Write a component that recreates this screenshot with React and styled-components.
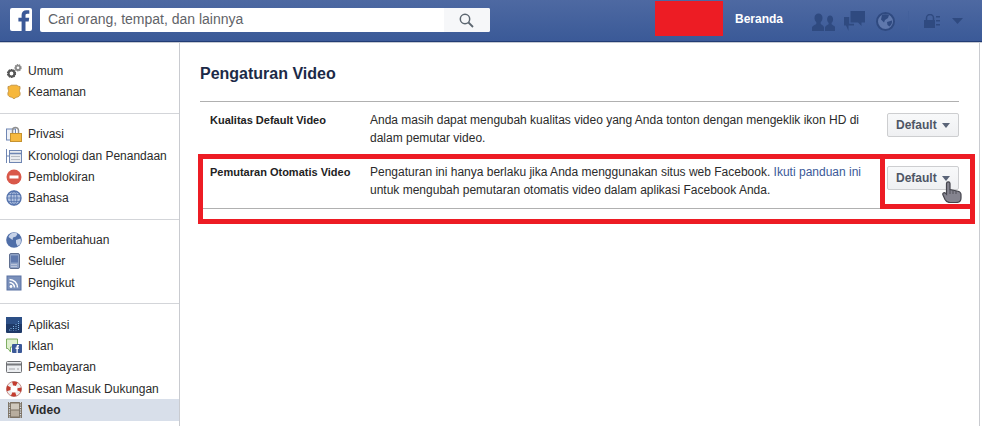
import React from "react";
import styled, { createGlobalStyle } from "styled-components";

const Global = createGlobalStyle`
  html, body { margin: 0; padding: 0; background: #fff; }
  body { font-family: "Liberation Sans", Arial, sans-serif; font-size: 12px; color: #333; }
  #root { width: 982px; height: 426px; overflow: hidden; position: relative; }
`;

const Page = styled.div`
  width: 982px;
  height: 426px;
  position: relative;
  overflow: hidden;
  display: flex;
  flex-direction: column;
`;

const Header = styled.header`
  height: 41px;
  flex: none;
  display: flex;
  align-items: flex-start;
  background: linear-gradient(#4e69a2, #3d5c99 85%, #3b5998);
  border-bottom: 1px solid #223c74;
  box-shadow: 0 1px 0 #c6cad3;
  padding-left: 10px;
`;

const Logo = styled.svg`
  width: 22px;
  height: 23px;
  margin-top: 8px;
  flex: none;
`;

const Search = styled.div`
  width: 450px;
  height: 24px;
  margin: 8px 0 0 8px;
  display: flex;
  background: #fff;
  border-radius: 2px;
  overflow: hidden;
  flex: none;
`;

const SearchText = styled.div`
  flex: 1;
  padding-left: 8px;
  font-size: 14px;
  line-height: 23px;
  color: #5f6368;
`;

const SearchButton = styled.div`
  width: 46px;
  background: #f6f7f9;
  display: flex;
  align-items: center;
  justify-content: center;
  padding-right: 2px;
  box-sizing: border-box;
`;

const Redaction = styled.div`
  width: 68px;
  height: 35px;
  margin: 1px 0 0 165px;
  background: #ed1c24;
  flex: none;
`;

const HomeLink = styled.div`
  margin-left: 12px;
  width: 69px;
  flex: none;
  font-size: 12px;
  font-weight: 700;
  line-height: 38px;
  color: #fff;
`;

const HeaderIcons = styled.div`
  display: flex;
  align-items: center;
  height: 38px;
  flex: none;
`;

const HeaderIcon = styled.svg`
  display: block;
  flex: none;
  margin-left: ${(p) => p.$gap}px;
  margin-top: 4px;
`;

const Divider = styled.div`
  width: 1px;
  height: 20px;
  margin-left: 13px;
  margin-top: 4px;
  background: #43609b;
`;

const Body = styled.div`
  flex: 1;
  display: flex;
  margin-top: 1px;
  min-height: 0;
  width: 980px;
`;

const Sidebar = styled.nav`
  width: 179px;
  flex: none;
  border-right: 1px solid #c9cbd0;
  padding-top: 17.5px;
`;

const Group = styled.ul`
  list-style: none;
  margin: 0;
  padding: 0 0 10px;
  & + & {
    padding-top: 9.5px;
    border-top: 1px solid #d3d5d9;
  }
`;

const Item = styled.li`
  height: 21.33px;
  display: flex;
  align-items: center;
  gap: 6px;
  padding-left: 6px;
  font-size: 12px;
  color: #2b2b2b;
  font-weight: ${(p) => (p.$active ? 700 : 400)};
  background: ${(p) => (p.$active ? "#d8dfea" : "transparent")};
`;

const ItemIcon = styled.svg`
  width: 16px;
  height: 16px;
  flex: none;
  display: block;
`;

const Main = styled.main`
  flex: 1;
  border-right: 1px solid #c9cbd0;
  padding: 0 20px;
`;

const Title = styled.h1`
  margin: 0;
  padding: 21px 0 0;
  height: 59px;
  box-sizing: border-box;
  font-size: 16px;
  line-height: 20px;
  font-weight: 700;
  color: #1c2a47;
  border-bottom: 1px solid #b0b0b0;
`;

const Row = styled.section`
  display: grid;
  grid-template-columns: 160px 500px 1fr;
  padding: ${(p) => p.$pad}px 0 0 10px;
  height: ${(p) => p.$h}px;
  box-sizing: border-box;
  border-bottom: ${(p) => (p.$last ? "1px solid #b0b0b0" : "none")};
`;

const Label = styled.div`
  font-size: 11px;
  font-weight: 700;
  line-height: 18px;
  color: #222;
`;

const Description = styled.div`
  font-size: 12px;
  line-height: 18px;
  color: #2b2b2b;
`;

const GuideLink = styled.span`
  color: #3b5998;
`;

const Cell = styled.div`
  display: flex;
  justify-content: flex-end;
`;

const Dropdown = styled.div`
  width: 72px;
  height: 24px;
  box-sizing: border-box;
  margin-top: ${(p) => p.$top}px;
  display: flex;
  align-items: center;
  gap: 5px;
  padding-left: 8px;
  border: 1px solid #cdced0;
  border-radius: 2px;
  background: linear-gradient(#f8f9fa, #eff0f2);
  font-size: 12px;
  font-weight: 700;
  color: #4e5665;
`;

const Caret = styled.span`
  width: 0;
  height: 0;
  border-left: 4px solid transparent;
  border-right: 4px solid transparent;
  border-top: 5px solid #5a6477;
`;

const Frame = styled.div`
  position: absolute;
  left: 198px;
  top: 154px;
  width: 777px;
  height: 70px;
  box-sizing: border-box;
  border: 5px solid #ed1c24;
  pointer-events: none;
`;

const Notch = styled.div`
  position: absolute;
  left: 880px;
  top: 159px;
  width: 90px;
  height: 50px;
  box-sizing: border-box;
  border-left: 5px solid #ed1c24;
  border-bottom: 5px solid #ed1c24;
`;

const Hand = styled.svg`
  position: absolute;
  left: 942px;
  top: 181px;
  width: 20px;
  height: 22px;
`;

const icons = {
  gears: (
    <>
      <circle cx="5.500" cy="10.500" r="3.800" fill="none" stroke="#555" strokeWidth="1.600" strokeDasharray="1.500 .9" />
      <circle cx="5.500" cy="10.500" r="2.900" fill="none" stroke="#555" strokeWidth="2" />
      <circle cx="12" cy="4.800" r="3" fill="none" stroke="#8a8a8a" strokeWidth="1.400" strokeDasharray="1.300 .8" />
      <circle cx="12" cy="4.800" r="2.200" fill="none" stroke="#8a8a8a" strokeWidth="1.800" />
    </>
  ),
  shield: (
    <path d="M2 2.500c1.500 0 2.200-.5 3-1.300h6c.8.8 1.500 1.300 3 1.300v2.500c-.8 1.200-.8 2.300 0 3.500 .6 2.500-.5 4-2.500 4.500-1.400.3-2.600.8-3.500 2-.9-1.200-2.100-1.700-3.500-2-2-.5-3.100-2-2.500-4.500.8-1.200.8-2.300 0-3.500z" fill="#f6b73c" stroke="#b98a3c" strokeWidth=".8" />
  ),
  lock: (
    <>
      <rect x=".5" y="3" width="9" height="11" fill="#eef1f7" stroke="#6f86b3" />
      <path d="M6.500 8V4.500a3 3 0 0 1 6 0V8" fill="none" stroke="#8f8f8f" strokeWidth="1.500" />
      <rect x="4.500" y="7.500" width="11" height="8" fill="#f6b93f" stroke="#c69330" />
    </>
  ),
  timeline: (
    <>
      <path d="M.5 1v14" stroke="#6f86b3" />
      <path d="M.5 8h3" stroke="#6f86b3" />
      <rect x="3.500" y="2.500" width="12" height="12" fill="#e9ebef" stroke="#6f86b3" />
      <path d="M3.500 5.500h12" stroke="#6f86b3" strokeWidth="1.500" />
      <path d="M5 8.500h9M5 11.500h9" stroke="#b6bac2" />
    </>
  ),
  block: (
    <>
      <circle cx="8" cy="8" r="7.500" fill="#d9584a" />
      <rect x="3.500" y="6.500" width="9" height="3" fill="#fff" />
    </>
  ),
  language: (
    <>
      <circle cx="8" cy="8" r="7" fill="#b3c3e0" stroke="#5573ad" strokeWidth="1.400" />
      <ellipse cx="8" cy="8" rx="3" ry="7" fill="none" stroke="#5573ad" />
      <path d="M1 8h14M2 4.500h12M2 11.500h12M8 1v14" stroke="#5573ad" strokeWidth=".8" />
    </>
  ),
  earth: (
    <>
      <circle cx="8" cy="8" r="7.800" fill="#4f6ea8" />
      <path d="M5 1.500c2-1 5-1 6.500.2L10 4.500 7 5.500 6.500 8 4.500 6.500 2.500 5c.5-1.500 1.500-2.800 2.500-3.500zM10 8l4.500-1.500c.8 2 .5 4-.5 6L11.500 14 10 11z" fill="#c6d2e8" />
    </>
  ),
  phone: (
    <>
      <rect x="3.500" y=".5" width="10" height="15" rx="1.500" fill="#8fa2c6" stroke="#5f6f90" />
      <rect x="5" y="2.500" width="7" height="7" fill="#5f78ac" />
      <path d="M5.500 11.500h6M5.500 13.500h6" stroke="#e4e7ee" strokeDasharray="1 1" />
    </>
  ),
  rss: (
    <>
      <rect x="1" y="1" width="14" height="14" fill="#7a90bb" stroke="#5a72a3" />
      <circle cx="5" cy="11.500" r="1.400" fill="#fff" />
      <path d="M3.500 7.500a5 5 0 0 1 5 5M3.500 4.500a8 8 0 0 1 8 8" fill="none" stroke="#fff" strokeWidth="1.500" />
    </>
  ),
  apps: (
    <>
      <rect width="16" height="16" rx="1" fill="#1f3a68" />
      <path d="M0 0h16v7H0z" fill="#2c4f86" />
      <path d="M3 13h1M5 11v2.500M7.500 9v4.500M10 7v6.500M12.500 4v9.500" stroke="#7fb5e6" strokeDasharray="1 1" />
    </>
  ),
  ads: (
    <>
      <path d="M.5 1h11v8h-7v5L2 10.500H.5z" fill="#dff0cf" stroke="#7fae63" />
      <rect x="6" y="6" width="10" height="9" rx="1" fill="#3b5998" />
      <path d="M10.500 15v-4H9.500V9.500h1V8.500c0-1 .6-1.500 1.500-1.500h1v1.500h-.7c-.4 0-.5.2-.5.5v.5h1.200l-.2 1.500h-1v4z" fill="#fff" />
    </>
  ),
  card: (
    <>
      <rect x=".5" y="2.500" width="15" height="11" rx="1" fill="#eceef1" stroke="#6e7074" />
      <rect x="1" y="4.500" width="14" height="2" fill="#77797d" />
      <path d="M3 10h6M11 10h2" stroke="#a4a6aa" />
    </>
  ),
  buoy: (
    <>
      <circle cx="8" cy="8" r="5.500" fill="none" stroke="#eee" strokeWidth="4" />
      <circle cx="8" cy="8" r="5.500" fill="none" stroke="#c43b2e" strokeWidth="4" strokeDasharray="4.300 4.340" strokeDashoffset="2.100" />
      <circle cx="8" cy="8" r="7.500" fill="none" stroke="#a8483f" strokeWidth=".6" />
    </>
  ),
  film: (
    <>
      <rect x="2" y="0" width="14" height="16" fill="#7d7264" />
      <rect x="5" y="1.500" width="8" height="6" fill="#cfc8bd" />
      <rect x="5" y="8.500" width="8" height="6" fill="#b8ad9e" />
      <path d="M3.500 0v16M14.500 0v16" stroke="#d8dfea" strokeWidth="1.200" strokeDasharray="1.200 1.200" />
    </>
  ),
};

const groups = [
  [["gears", "Umum"], ["shield", "Keamanan"]],
  [["lock", "Privasi"], ["timeline", "Kronologi dan Penandaan"], ["block", "Pemblokiran"], ["language", "Bahasa"]],
  [["earth", "Pemberitahuan"], ["phone", "Seluler"], ["rss", "Pengikut"]],
  [["apps", "Aplikasi"], ["ads", "Iklan"], ["card", "Pembayaran"], ["buoy", "Pesan Masuk Dukungan"], ["film", "Video", true]],
];

const dark = "#2f4a80";

export default function App() {
  return (
    <Page>
      <Global />
      <Header>
        <Logo viewBox="0 0 22 23">
          <rect width="22" height="23" rx="2" fill="#fff" />
          <path d="M15.500 23v-9.500h3.200l.5-3.700h-3.700V7.500c0-1.100.3-1.800 1.800-1.800h2V2.400c-.3 0-1.500-.1-2.900-.1-2.800 0-4.800 1.700-4.800 4.800v2.700H8.400v3.700h3.200V23z" fill="#3b5998" />
        </Logo>
        <Search>
          <SearchText>Cari orang, tempat, dan lainnya</SearchText>
          <SearchButton>
            <svg width="15" height="15" viewBox="0 0 15 15" fill="none" stroke="#5c6670" strokeWidth="1.500">
              <circle cx="6" cy="6" r="4.700" />
              <path d="M9.500 9.500l4.500 4.500" strokeWidth="1.800" />
            </svg>
          </SearchButton>
        </Search>
        <Redaction />
        <HomeLink>Beranda</HomeLink>
        <HeaderIcons>
          <HeaderIcon $gap={8} width="23" height="19" viewBox="0 0 23 19" fill={dark}>
            <path d="M13 19v-3.500c0-1.500 2.800-2.500 3.600-3.200v-1.500c-1-.8-1.500-2-1.500-3.600 0-2.200 1.300-3.700 3-3.700s3 1.500 3 3.700c0 1.600-.5 2.800-1.500 3.600v1.500c.8.700 2.400 1.500 3.400 2.500V19z" />
            <path d="M0 19v-3.500c0-1.500 3-2.500 4.300-3.500v-2C3 9 2.500 7.500 2.500 6c0-2.800 1.700-4.500 4-4.500s4 1.700 4 4.500c0 1.500-.5 3-1.800 4v2c1.300 1 3.300 1.800 3.300 3.500V19z" />
          </HeaderIcon>
          <HeaderIcon $gap={9} width="21" height="20" viewBox="0 0 21 20" fill={dark}>
            <path d="M6.500 0H21v11.500h-3.500V15l-3.500-3.500H6.500z" />
            <path d="M0 6h5.200v6.800H10v1.700H4.500V20L2 14.500H0z" />
          </HeaderIcon>
          <HeaderIcon $gap={11} width="19" height="19" viewBox="0 0 19 19">
            <circle cx="9.500" cy="9.500" r="8.500" fill="#5f78ac" stroke={dark} strokeWidth="2" />
            <path d="M6 3c2-1 5-1 7 0l-1 3-3 2-1 2.500-3-3zM11 10l5-1.500c.3 2.500-.7 4.500-2.500 6l-2-1.500z" fill={dark} />
          </HeaderIcon>
          <Divider />
          <HeaderIcon $gap={15} width="16" height="14" viewBox="0 0 16 14" fill={dark}>
            <path d="M2.500 6V4a3.500 3.500 0 0 1 7 0v2" fill="none" stroke={dark} strokeWidth="1.500" />
            <rect x="0" y="6" width="11" height="8" />
            <path d="M12 2h4v1.500h-4zM12 6h4v1.500h-4zM12 10h4v1.500h-4z" />
          </HeaderIcon>
          <HeaderIcon $gap={12} width="11" height="6" viewBox="0 0 11 6" fill={dark}>
            <path d="M0 0h11L5.500 6z" />
          </HeaderIcon>
        </HeaderIcons>
      </Header>
      <Body>
        <Sidebar>
          {groups.map((group, i) => (
            <Group key={i}>
              {group.map(([icon, label, active]) => (
                <Item key={label} $active={active}>
                  <ItemIcon viewBox="0 0 16 16">{icons[icon]}</ItemIcon>
                  {label}
                </Item>
              ))}
            </Group>
          ))}
        </Sidebar>
        <Main>
          <Title>Pengaturan Video</Title>
          <Row $h={53} $pad={9}>
            <Label>Kualitas Default Video</Label>
            <Description>
              Anda masih dapat mengubah kualitas video yang Anda tonton dengan mengeklik ikon HD di dalam pemutar video.
            </Description>
            <Cell>
              <Dropdown $top={2}>
                Default
                <Caret />
              </Dropdown>
            </Cell>
          </Row>
          <Row $h={54} $pad={8} $last>
            <Label>Pemutaran Otomatis Video</Label>
            <Description>
              Pengaturan ini hanya berlaku jika Anda menggunakan situs web Facebook. <GuideLink>Ikuti panduan ini</GuideLink> untuk mengubah pemutaran otomatis video dalam aplikasi Facebook Anda.
            </Description>
            <Cell>
              <Dropdown $top={3}>
                Default
                <Caret />
              </Dropdown>
            </Cell>
          </Row>
        </Main>
      </Body>
      <Frame />
      <Notch />
      <Hand viewBox="0 0 20 22">
        <path d="M4.500 2.500c0-2.200 3.500-2.200 3.500 0v6l7 1.500c2.500.5 4 1.500 4 3.500v3.500c0 2.800-2 4.500-5 4.500H8c-2.500 0-4-1-5-3L1 14c-.8-1.700 1-3 2.500-1.800l1 1z" fill="#85848f" stroke="#45454d" strokeWidth="1.200" />
        <path d="M8 8.500V13M11 9.500V13M14 10v3" stroke="#45454d" strokeWidth=".8" />
      </Hand>
    </Page>
  );
}
